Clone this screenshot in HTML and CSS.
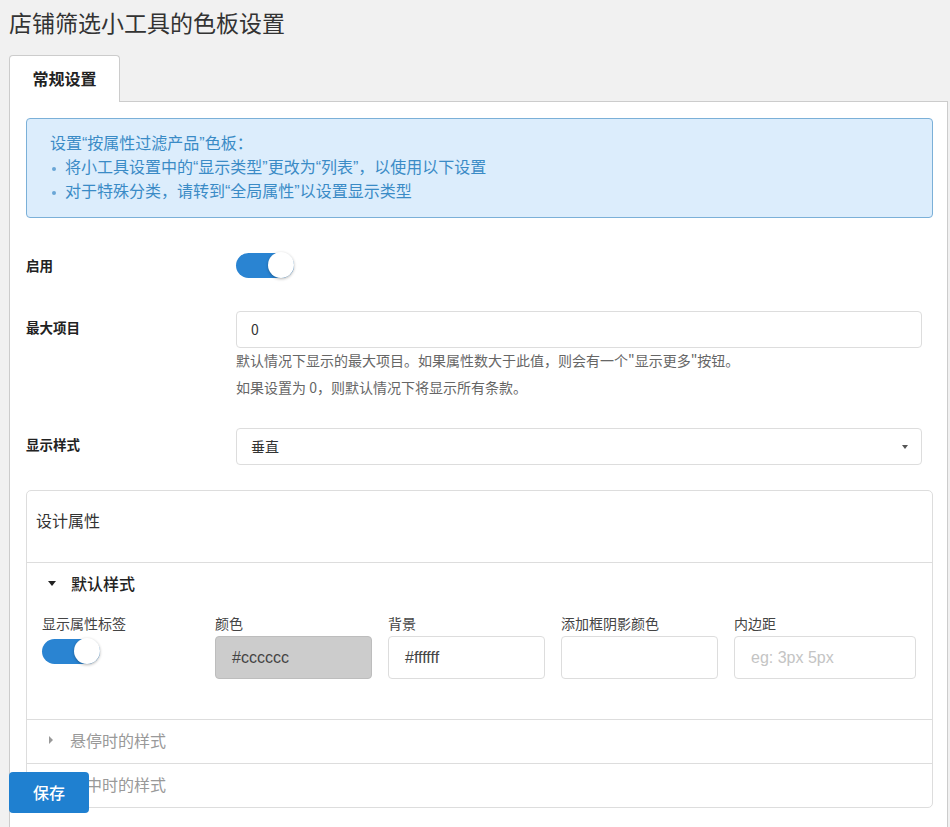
FILE: index.html
```html
<!DOCTYPE html>
<html lang="zh-CN">
<head>
<meta charset="utf-8">
<title>店铺筛选小工具的色板设置</title>
<link rel="stylesheet" href="styles.css">
</head>
<body>
<h1 class="page-title">店铺筛选小工具的色板设置</h1>
<div class="tabs">
  <div class="tab tab-active">常规设置</div>
</div>
<div class="panel">
  <div class="notice">
    <div class="notice-title">设置“按属性过滤产品”色板：</div>
    <ul class="notice-list">
      <li>将小工具设置中的“显示类型”更改为“列表”，以使用以下设置</li>
      <li>对于特殊分类，请转到“全局属性”以设置显示类型</li>
    </ul>
  </div>

  <div class="form-row row-center row-enable">
    <div class="form-label">启用</div>
    <div class="form-field"><span class="toggle on"><span class="knob"></span></span></div>
  </div>

  <div class="form-row row-max">
    <div class="form-label label-top">最大项目</div>
    <div class="form-field">
      <div class="text-input">0</div>
      <p class="help help-first">默认情况下显示的最大项目。如果属性数大于此值，则会有一个"显示更多"按钮。</p>
      <p class="help">如果设置为 0，则默认情况下将显示所有条款。</p>
    </div>
  </div>

  <div class="form-row row-style">
    <div class="form-label label-top">显示样式</div>
    <div class="form-field">
      <div class="text-input select">垂直<span class="select-caret"></span></div>
    </div>
  </div>

  <div class="design-box">
    <div class="design-header">设计属性</div>
    <div class="section">
      <div class="section-head open"><span class="caret-down"></span>默认样式</div>
      <div class="section-body">
        <div class="field">
          <div class="field-label">显示属性标签</div>
          <span class="toggle on"><span class="knob"></span></span>
        </div>
        <div class="field">
          <div class="field-label">颜色</div>
          <div class="box-input filled">#cccccc</div>
        </div>
        <div class="field">
          <div class="field-label">背景</div>
          <div class="box-input">#ffffff</div>
        </div>
        <div class="field">
          <div class="field-label">添加框阴影颜色</div>
          <div class="box-input"></div>
        </div>
        <div class="field">
          <div class="field-label">内边距</div>
          <div class="box-input placeholder">eg: 3px 5px</div>
        </div>
      </div>
    </div>
    <div class="section">
      <div class="section-head closed"><span class="caret-right"></span>悬停时的样式</div>
    </div>
    <div class="section">
      <div class="section-head closed"><span class="caret-right"></span>选中时的样式</div>
    </div>
  </div>
</div>

<button class="save-btn">保存</button>
</body>
</html>
```

FILE: styles.css
```css
* { box-sizing: border-box; }

html, body {
  margin: 0;
  padding: 0;
}

body {
  background: #f1f1f1;
  font-family: "Noto Sans CJK SC", "Liberation Sans", sans-serif;
  color: #333;
}

.page-title {
  margin: 0;
  padding: 7px 9px 0;
  font-size: 23px;
  line-height: 30px;
  font-weight: 400;
  color: #333;
}

.tabs {
  display: flex;
  margin-top: 18px;
  padding-left: 9px;
}

.tab {
  width: 111px;
  height: 47px;
  margin-bottom: -1px;
  border: 1px solid #ccc;
  border-bottom: none;
  border-radius: 4px 4px 0 0;
  background: #fff;
  font-size: 16px;
  font-weight: 700;
  line-height: 44px;
  text-align: center;
  color: #222;
  position: relative;
  z-index: 1;
}

.panel {
  margin: 0 2px 0 9px;
  background: #fff;
  border: 1px solid #ccc;
  border-bottom: none;
  padding: 16px 14px 40px 16px;
}

.notice {
  background: #dcedfc;
  border: 1px solid #7bb0d8;
  border-radius: 4px;
  padding: 13px 24px 13px 23px;
  color: #3a8bc6;
  font-family: "Liberation Sans", "Noto Sans CJK SC", sans-serif;
  font-size: 16px;
  line-height: 24px;
}

.notice-list {
  margin: 0;
  padding: 0;
  list-style: none;
}

.notice-list li {
  position: relative;
  padding-left: 15px;
}

.notice-list li::before {
  content: "";
  position: absolute;
  left: 2px;
  top: 11px;
  width: 4px;
  height: 4px;
  border-radius: 50%;
  background: #6aa6d6;
}

.form-row {
  display: flex;
  margin-right: 11px;
}

.row-center { align-items: center; }

.row-enable { margin-top: 33px; }
.row-max { margin-top: 33px; }
.row-style { margin-top: 31px; }

.form-label {
  width: 210px;
  flex: none;
  font-size: 13.5px;
  font-weight: 700;
  color: #222;
  line-height: 20px;
}

.label-top { padding-top: 6px; }

.form-field {
  flex: 1;
  min-width: 0;
}

.toggle {
  display: inline-block;
  position: relative;
  width: 58px;
  height: 25px;
  border-radius: 13px;
  background: #2a84d2;
  vertical-align: middle;
}

.toggle .knob {
  position: absolute;
  right: 0;
  top: -1px;
  width: 26px;
  height: 26px;
  border-radius: 50%;
  background: #fff;
  box-shadow: 0 1px 3px rgba(0, 0, 0, 0.3);
}

.text-input {
  height: 37px;
  border: 1px solid #ddd;
  border-radius: 4px;
  padding: 0 14px;
  font-size: 14px;
  line-height: 35px;
  color: #333;
  background: #fff;
}

.select {
  position: relative;
}

.select-caret {
  position: absolute;
  right: 13px;
  top: 16px;
  width: 0;
  height: 0;
  border-left: 3.5px solid transparent;
  border-right: 3.5px solid transparent;
  border-top: 4px solid #555;
}

.help {
  margin: 7px 0 0;
  font-size: 14px;
  line-height: 20px;
  color: #666;
}

.help-first { margin-top: 2px; }

.design-box {
  margin-top: 25px;
  border: 1px solid #ddd;
  border-radius: 5px;
}

.design-header {
  height: 72px;
  padding: 18px 9px 0;
  font-size: 16px;
  line-height: 22px;
  color: #333;
  border-bottom: 1px solid #ddd;
}

.section + .section {
  border-top: 1px solid #ddd;
}

.section-head {
  display: flex;
  align-items: center;
  height: 43px;
  padding: 0 0 3px 21px;
  font-size: 16px;
  line-height: 22px;
}

.section-head.open {
  color: #222;
  font-weight: 500;
}

.section-head.closed {
  color: #999;
}

.caret-down {
  width: 0;
  height: 0;
  margin-right: 15px;
  border-left: 4px solid transparent;
  border-right: 4px solid transparent;
  border-top: 5px solid #222;
}

.caret-right {
  width: 0;
  height: 0;
  margin: 0 17px 0 1px;
  border-top: 4px solid transparent;
  border-bottom: 4px solid transparent;
  border-left: 4px solid #999;
}

.section-body {
  display: grid;
  grid-template-columns: repeat(4, 157px) 1fr;
  column-gap: 16px;
  padding: 7px 16px 40px 15px;
}

.field-label {
  font-size: 14px;
  line-height: 20px;
  color: #444;
  margin-bottom: 3px;
}

.field .toggle {
  margin-top: 1px;
}

.box-input {
  height: 43px;
  border: 1px solid #ddd;
  border-radius: 4px;
  padding: 0 16px;
  font-family: "Liberation Sans", "Noto Sans CJK SC", sans-serif;
  font-size: 16px;
  line-height: 41px;
  color: #444;
  background: #fff;
}

.box-input.filled {
  background: #cccccc;
  border-color: #bdbdbd;
  color: #444;
}

.box-input.placeholder {
  color: #c4c4c4;
}

.save-btn {
  position: fixed;
  left: 9px;
  bottom: 14px;
  width: 80px;
  height: 41px;
  border: none;
  border-radius: 4px;
  background: #1f80d0;
  color: #fff;
  font-family: "Noto Sans CJK SC", sans-serif;
  font-size: 16px;
  font-weight: 500;
  padding: 0 0 2px;
}
```
